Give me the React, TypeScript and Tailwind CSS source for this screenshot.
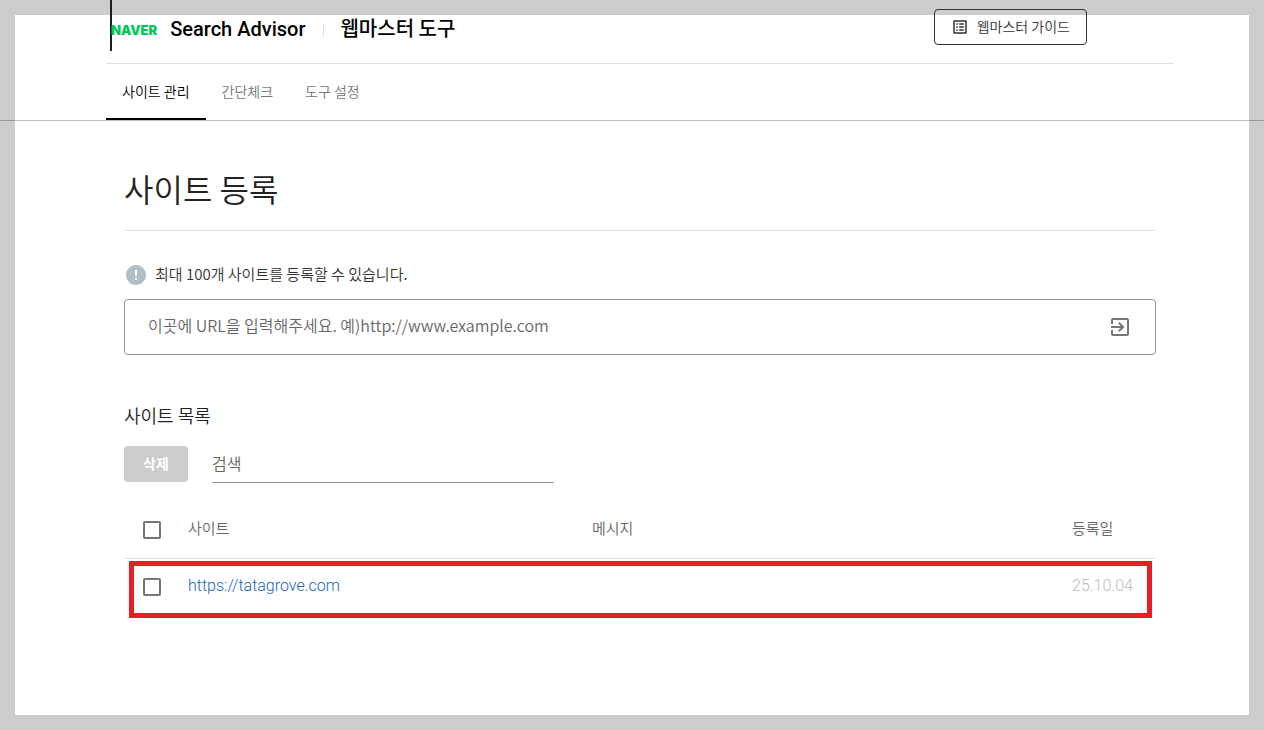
import { useState } from "react";
import { MdError, MdExitToApp, MdListAlt } from "react-icons/md";
import clsx from "clsx";

interface Site {
  url: string;
  message: string;
  date: string;
}

const tabs = ["사이트 관리", "간단체크", "도구 설정"];

const sites: Site[] = [
  { url: "https://tatagrove.com", message: "", date: "25.10.04" },
];

const checkboxClass =
  "block size-[18px] appearance-none rounded-xs border-2 border-[#757575] checked:bg-[#757575]";

function Header() {
  return (
    <header className="pl-[106px] pr-[90px]">
      <div className="flex h-16 items-start border-b border-[#e0e0e0]">
        <div className="ml-1 h-[51px] w-[2px] bg-[#1e1e1e]" />
        <a href="#" className="flex h-[58px] items-center">
          <span className="-ml-px pt-0.5 font-['Inter',sans-serif] text-[13px] font-black leading-4 text-[#03c75a]">
            NAVER
          </span>
          <span className="ml-[13px] font-['Roboto',sans-serif] text-[20px] leading-7 font-medium text-black">
            Search Advisor
          </span>
        </a>
        <div className="mt-[23px] ml-[18px] h-[14px] w-px bg-[#e0e0e0]" />
        <span className="mt-[14px] ml-4 text-[20px] leading-7 font-medium text-black">
          웹마스터 도구
        </span>
        <button
          type="button"
          className="mt-[9px] mr-[87px] ml-auto flex h-9 items-center rounded border border-[#333] px-4 pb-px text-[14px] text-[#333]"
        >
          <MdListAlt className="mr-2 size-[18px]" />
          웹마스터 가이드
        </button>
      </div>
    </header>
  );
}

function Tabs() {
  const [active, setActive] = useState(0);

  return (
    <nav className="flex h-[57px] border-b border-black/25 pl-[106px]">
      {tabs.map((tab, i) => (
        <button
          key={tab}
          type="button"
          onClick={() => setActive(i)}
          className={clsx(
            "border-b-2 px-4 text-[14px]",
            active === i
              ? "border-black text-black"
              : "border-transparent text-[#757575]"
          )}
        >
          {tab}
        </button>
      ))}
    </nav>
  );
}

function SiteForm() {
  const [url, setUrl] = useState("");

  return (
    <form onSubmit={(e) => e.preventDefault()}>
      <label htmlFor="site-url" className="mt-[31px] flex items-center gap-[7px] text-[15px] leading-6 text-[#333]">
        <MdError className="size-6 text-[#b0bec5]" />
        <span className="pb-0.5">최대 100개 사이트를 등록할 수 있습니다.</span>
      </label>
      <div className="mt-[11px] flex h-14 items-center rounded border border-[#949494] px-[23px]">
        <input
          id="site-url"
          type="text"
          value={url}
          onChange={(e) => setUrl(e.target.value)}
          placeholder="이곳에 URL을 입력해주세요. 예)http://www.example.com"
          className="h-full flex-1 pb-1 text-[16px] outline-none placeholder:text-[#666]"
        />
        <button type="submit" aria-label="등록" className="text-[#757575]">
          <MdExitToApp className="size-6" />
        </button>
      </div>
    </form>
  );
}

function SiteTable() {
  const [checked, setChecked] = useState<string[]>([]);

  const toggle = (url: string) => {
    setChecked(
      checked.includes(url) ? checked.filter((u) => u !== url) : [...checked, url]
    );
  };

  return (
    <div className="relative mt-[19px]">
      <table className="w-full table-fixed text-left text-[15px]">
        <thead>
          <tr className="h-14 border-b border-[#e0e0e0] text-[#666]">
            <th className="w-16 pl-[19px]">
              <input
                type="checkbox"
                aria-label="전체 선택"
                className={checkboxClass}
                checked={checked.length === sites.length}
                onChange={(e) => setChecked(e.target.checked ? sites.map((s) => s.url) : [])}
              />
            </th>
            <th className="w-[404px] pb-1 font-[350]">사이트</th>
            <th className="pb-1 font-[350]">메시지</th>
            <th className="w-[84px] pb-1 font-[350]">등록일</th>
          </tr>
        </thead>
        <tbody>
          {sites.map((site) => (
            <tr key={site.url} className="h-[58px] font-['Roboto','Noto_Sans_CJK_KR',sans-serif]">
              <td className="pl-[19px]">
                <input
                  type="checkbox"
                  aria-label={site.url}
                  className={checkboxClass}
                  checked={checked.includes(site.url)}
                  onChange={() => toggle(site.url)}
                />
              </td>
              <td className="pb-0.5">
                <a href={site.url} className="text-[16px] text-[#1565c0]">
                  {site.url}
                </a>
              </td>
              <td className="pb-0.5">{site.message}</td>
              <td className="pb-0.5 text-[16px] text-[#bdbdbd]">{site.date}</td>
            </tr>
          ))}
        </tbody>
      </table>
      <div className="pointer-events-none absolute top-[59px] right-1 left-[5px] h-[57px] border-5 border-[#ed1c24]" />
    </div>
  );
}

export default function App() {
  const [query, setQuery] = useState("");

  return (
    <div className="relative isolate min-h-screen bg-[#ccc] font-['Noto_Sans_CJK_KR',sans-serif] font-[350]">
      <div className="absolute inset-[15px] -z-10 bg-white" />
      <Header />
      <Tabs />
      <main className="pr-[108px] pb-28 pl-[124px]">
        <h1 className="border-b border-[#e0e0e0] pt-[43px] pb-[18px] text-[32px] leading-[48px] text-[#222]">
          사이트 등록
        </h1>
        <SiteForm />
        <h2 className="mt-[46px] text-[18px] leading-7 text-[#222]">사이트 목록</h2>
        <div className="mt-[17px] flex items-start gap-6">
          <button
            type="button"
            className="h-9 w-16 rounded bg-[#ccc] pb-px text-[14px] font-bold text-white"
          >
            삭제
          </button>
          <input
            type="search"
            aria-label="검색"
            value={query}
            onChange={(e) => setQuery(e.target.value)}
            placeholder="검색"
            className="h-[37px] w-[342px] border-b border-[#949494] pb-0.5 text-[16px] outline-none placeholder:text-[#666]"
          />
        </div>
        <SiteTable />
      </main>
    </div>
  );
}
